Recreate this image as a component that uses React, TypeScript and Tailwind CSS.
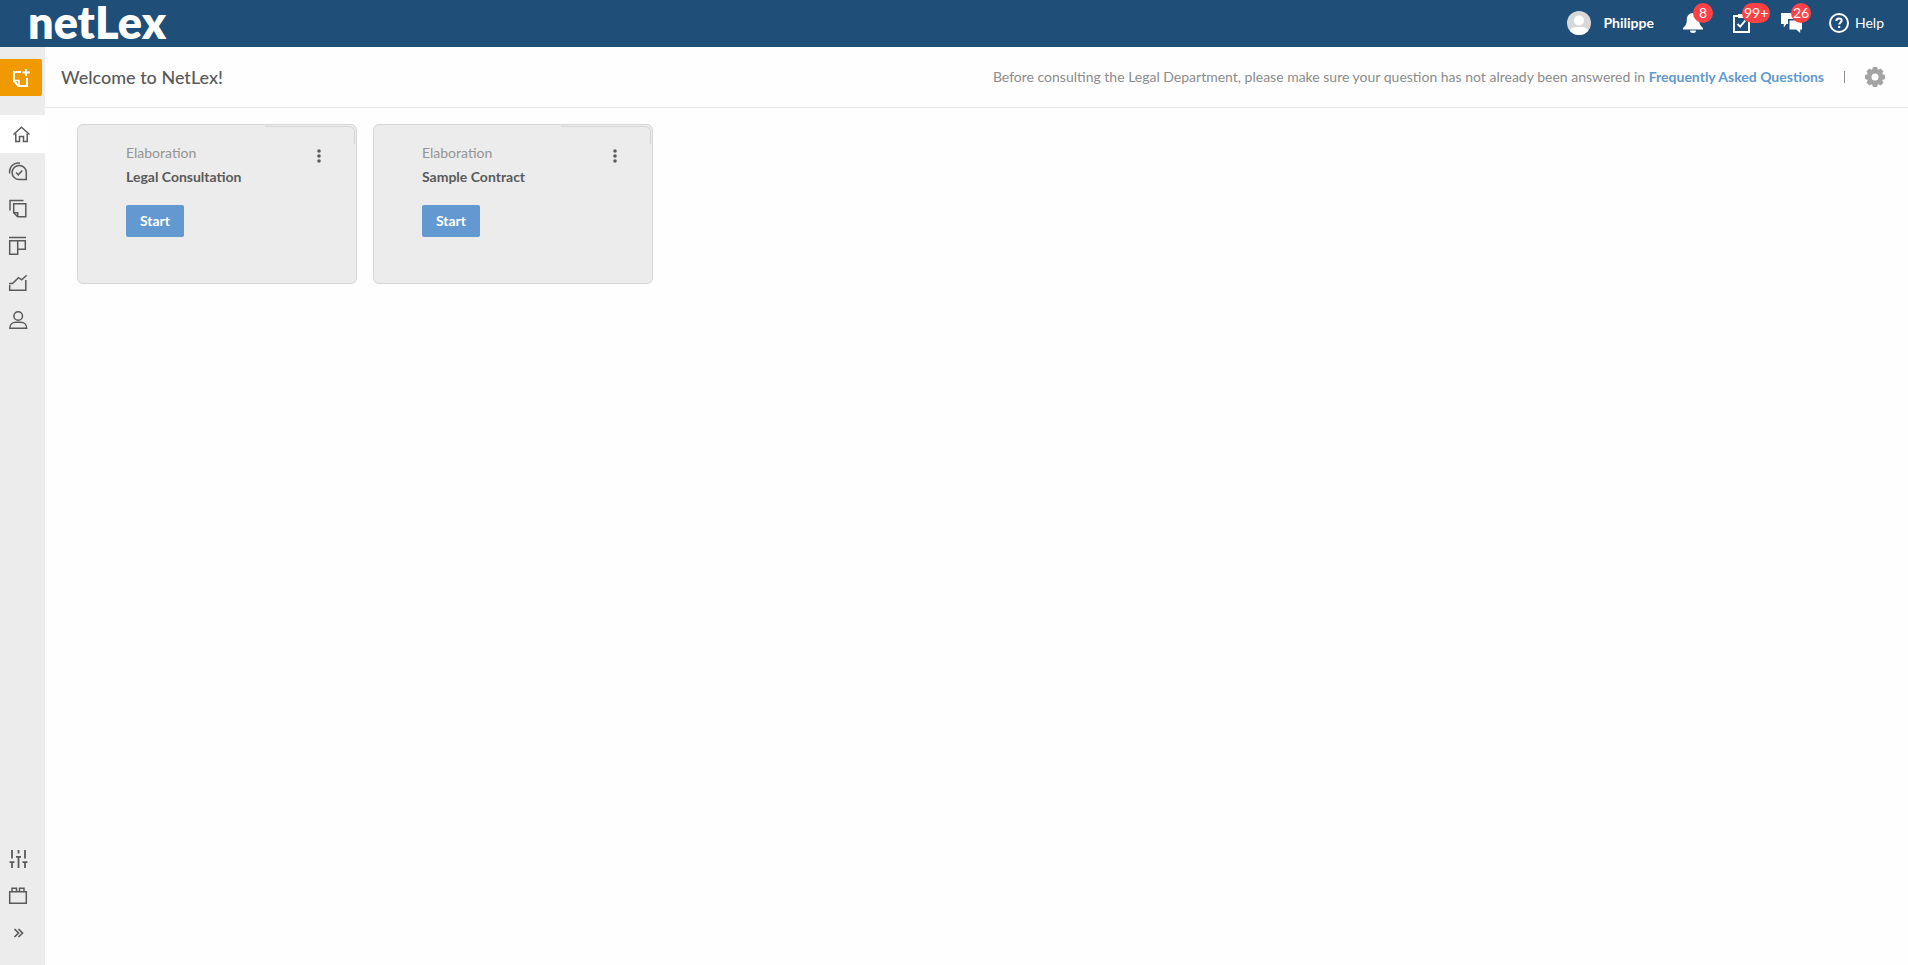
import type { ReactNode } from "react";

type IconProps = { children: ReactNode; className?: string };

function LineIcon({ children, className = "" }: IconProps) {
  return (
    <svg
      viewBox="0 0 20 20"
      className={`size-5 fill-none stroke-[#5a5a5a] ${className}`}
      strokeWidth="1.5"
      aria-hidden="true"
    >
      {children}
    </svg>
  );
}

const mainLinks = [
  {
    label: "Tasks",
    icon: (
      <>
        <path d="M11.200 3.400a7.100 7.100 0 1 0 0 14.200h7.100v-7.100a7.100 7.100 0 0 0-7.100-7.100z" />
        <path d="M1.800 11.500A8.600 8.600 0 0 1 12 1.200" />
        <path d="M8 10.500l2.300 2.300 4-4.300" />
      </>
    ),
  },
  {
    label: "Documents",
    icon: (
      <>
        <path d="M2 11.500V1.500h13.500" />
        <path d="M5.700 4.800h12.100v13H9.700l-4-4z" />
        <path d="M5.700 13.800h4v4" />
      </>
    ),
  },
  {
    label: "Boards",
    icon: (
      <>
        <path d="M1 1.500h17" />
        <path d="M1.700 4.700h15.600v8.600H9.700v5H1.700z" />
        <path d="M9.700 4.700v9" />
      </>
    ),
  },
  {
    label: "Reports",
    icon: (
      <>
        <path d="M1.700 12v5.300h16.100V7" />
        <path d="M1 10.500h3.500l6-5.800 3.200 2.100 5-4.600" />
      </>
    ),
  },
  {
    label: "Contacts",
    icon: (
      <>
        <circle cx="10.200" cy="6" r="4.300" />
        <path d="M1.800 18.300c0-4 2.800-6 6-6h4.900c3.200 0 6 2 6 6z" />
      </>
    ),
  },
];

const bottomLinks = [
  {
    label: "Settings",
    icon: (
      <path
        strokeWidth="1.800"
        d="M4 1v8.500M4 12.500v6.500M1.500 13.200h5M10.500 1v3.500M10.500 7.500V19M8 7.800h5M17 1v8.500M17 12.500v6.500M14.500 13.200h5"
      />
    ),
  },
  {
    label: "Modules",
    icon: (
      <>
        <path d="M1.700 5.700h16.600v11.600H1.700z" />
        <path d="M4 5.500V2.200h4.500v3.300M11.500 5.500V2.200H16v3.300" />
      </>
    ),
  },
  {
    label: "Expand menu",
    icon: <path strokeWidth="1.700" d="M6.500 6l4 4-4 4M10.500 6l4 4-4 4" />,
  },
];

function Badge({ children }: { children: ReactNode }) {
  return (
    <span className="absolute -top-2.5 left-2.5 flex h-5 min-w-5 items-center justify-center rounded-full bg-[#ff4145] px-0.5 text-sm leading-5 text-white">
      {children}
    </span>
  );
}

function Header() {
  return (
    <header className="flex h-[47px] shrink-0 items-center justify-between bg-[#1f4e79] pr-6 pb-0.5 pl-7 text-white">
      <a href="#" className="text-[45px] leading-[45px] font-extrabold">
        netLex
      </a>
      <div className="flex items-center">
        <a href="#" className="flex items-center gap-3 text-sm font-bold">
          <svg viewBox="0 0 24 24" className="size-6" aria-hidden="true">
            <clipPath id="avatar">
              <circle cx="12" cy="12" r="12" />
            </clipPath>
            <g clipPath="url(#avatar)">
              <path fill="#d8d8d8" d="M0 0h24v24H0z" />
              <circle cx="12" cy="9.500" r="5" fill="#fff" />
              <path fill="#fff" d="M2 24c0-5 3-8 7-8h6c4 0 7 3 7 8z" />
            </g>
          </svg>
          Philippe
        </a>
        <button aria-label="Notifications" className="relative ml-[29px]">
          <svg viewBox="0 0 20 20" className="size-5 fill-white" aria-hidden="true">
            <path d="M10 0C6 0 3.800 3 3.800 6.500c0 4-.8 6-3.800 8.500v1.500h20V15c-3-2.500-3.800-4.500-3.800-8.500C16.200 3 14 0 10 0z" />
            <path d="M7 17.500h6a3 2.500 0 0 1-6 0z" />
          </svg>
          <Badge>8</Badge>
        </button>
        <button aria-label="Tasks" className="relative ml-[29px]">
          <svg viewBox="0 0 20 20" className="size-5 fill-none stroke-white" aria-hidden="true">
            <path strokeWidth="2" d="M2 3h15v16H2z" />
            <path fill="#fff" stroke="none" d="M6 1h7v4H6z" />
            <path strokeWidth="1.800" d="M5.500 11l2.700 2.700 5-6" />
          </svg>
          <Badge>99+</Badge>
        </button>
        <button aria-label="Messages" className="relative ml-[29px]">
          <svg viewBox="0 0 22 20" className="h-5 w-[22px] fill-white" aria-hidden="true">
            <path d="M0 0h15v6H7v5H5.500L2.800 14.500V11H0z" />
            <path d="M8.500 7.500H21v9h-1.800V20l-4-3.500H8.500z" />
          </svg>
          <Badge>26</Badge>
        </button>
        <a href="#" className="ml-[26px] flex items-center gap-1.5 text-sm">
          <svg viewBox="0 0 20 20" className="size-5 fill-none stroke-white" aria-hidden="true">
            <circle cx="10" cy="10" r="9" strokeWidth="2" />
            <path strokeWidth="2" d="M7.300 8c0-1.800 1.200-2.600 2.700-2.600s2.700.8 2.700 2.200c0 1.800-2.500 2-2.500 4M10.200 13v2" />
          </svg>
          Help
        </a>
      </div>
    </header>
  );
}

function Sidebar() {
  return (
    <nav className="flex w-[45px] shrink-0 flex-col bg-[#ececec] pt-3 pb-3.5">
      <button
        aria-label="New document"
        className="flex h-[37px] w-[42px] items-center justify-center rounded-r-xs bg-[#f09a00]"
      >
        <svg viewBox="0 0 20 20" className="size-5 fill-none stroke-white" strokeWidth="2" aria-hidden="true">
          <path d="M10 4H3v9l4.500 5H16v-8" />
          <path d="M3 12.500h5V18" strokeWidth="1.500" />
          <path d="M15 1v7M11.500 4.500h7.500" />
        </svg>
      </button>
      <a
        href="#"
        aria-label="Home"
        aria-current="page"
        className="mt-[19px] flex h-[38px] items-center bg-white pl-3"
      >
        <LineIcon>
          <path d="M1.500 10.500L9.500 3.200l8 7.300" />
          <path d="M3.800 9.500v8h3.700v-5h4v5h3.700v-8" />
        </LineIcon>
      </a>
      <ul>
        {mainLinks.map((link) => (
          <li key={link.label}>
            <a href="#" aria-label={link.label} className="flex h-[37px] items-center pl-2">
              <LineIcon>{link.icon}</LineIcon>
            </a>
          </li>
        ))}
      </ul>
      <ul className="mt-auto">
        {bottomLinks.map((link) => (
          <li key={link.label}>
            <a href="#" aria-label={link.label} className="flex h-[37px] items-center pl-2">
              <LineIcon>{link.icon}</LineIcon>
            </a>
          </li>
        ))}
      </ul>
    </nav>
  );
}

function TitleBar() {
  return (
    <div className="flex h-[61px] items-center justify-between border-b border-[#e8e8e8] pr-[23px] pl-4">
      <h1 className="text-lg leading-6 font-medium text-[#5a5a5a]">Welcome to NetLex!</h1>
      <div className="flex items-center text-sm text-[#8c8c8c]">
        <p>
          Before consulting the Legal Department, please make sure your question has not already been answered in{" "}
          <a href="#" className="font-bold text-[#6199d0]">
            Frequently Asked Questions
          </a>
        </p>
        <span className="mx-5 h-3 w-px bg-[#8c8c8c]" />
        <button aria-label="Page settings">
          <svg viewBox="0 0 20 20" className="size-5" aria-hidden="true">
            <g fill="#a3a3a3">
              {[0, 45, 90, 135].map((angle) => (
                <path key={angle} d="M8 0h4l1 3v14l-1 3H8l-1-3V3z" transform={`rotate(${angle} 10 10)`} />
              ))}
            </g>
            <circle cx="10" cy="10" r="3.500" fill="#fff" />
          </svg>
        </button>
      </div>
    </div>
  );
}

function StartCard({ title }: { title: string }) {
  return (
    <article className="relative flex h-40 w-[280px] items-start justify-between rounded-md border border-[#d6d6d6] bg-[#ececec] pt-4 pr-8 pl-12">
      <span className="absolute top-px right-px h-[18px] w-[90px] rounded-tr-md border-t border-r border-[#d6d6d6]" />
      <div>
        <p className="text-sm leading-6 text-[#949494]">Elaboration</p>
        <h2 className="text-sm leading-6 font-bold text-[#5a5a5a]">{title}</h2>
        <button className="mt-4 h-8 w-[58px] rounded-xs bg-[#6199d0] text-sm font-bold text-white">Start</button>
      </div>
      <button aria-label={`Options for ${title}`} className="mt-1.5">
        <svg viewBox="0 0 10 18" className="h-[18px] w-2.5 fill-[#5a5a5a]" aria-hidden="true">
          <circle cx="5" cy="4" r="1.800" />
          <circle cx="5" cy="9" r="1.800" />
          <circle cx="5" cy="14" r="1.800" />
        </svg>
      </button>
    </article>
  );
}

export default function App() {
  return (
    <div className="flex min-h-screen flex-col bg-[#fefefe] font-['Lato',sans-serif]">
      <Header />
      <div className="flex grow">
        <Sidebar />
        <main className="min-w-0 grow">
          <TitleBar />
          <div className="flex flex-wrap gap-4 px-8 py-4">
            <StartCard title="Legal Consultation" />
            <StartCard title="Sample Contract" />
          </div>
        </main>
      </div>
    </div>
  );
}
